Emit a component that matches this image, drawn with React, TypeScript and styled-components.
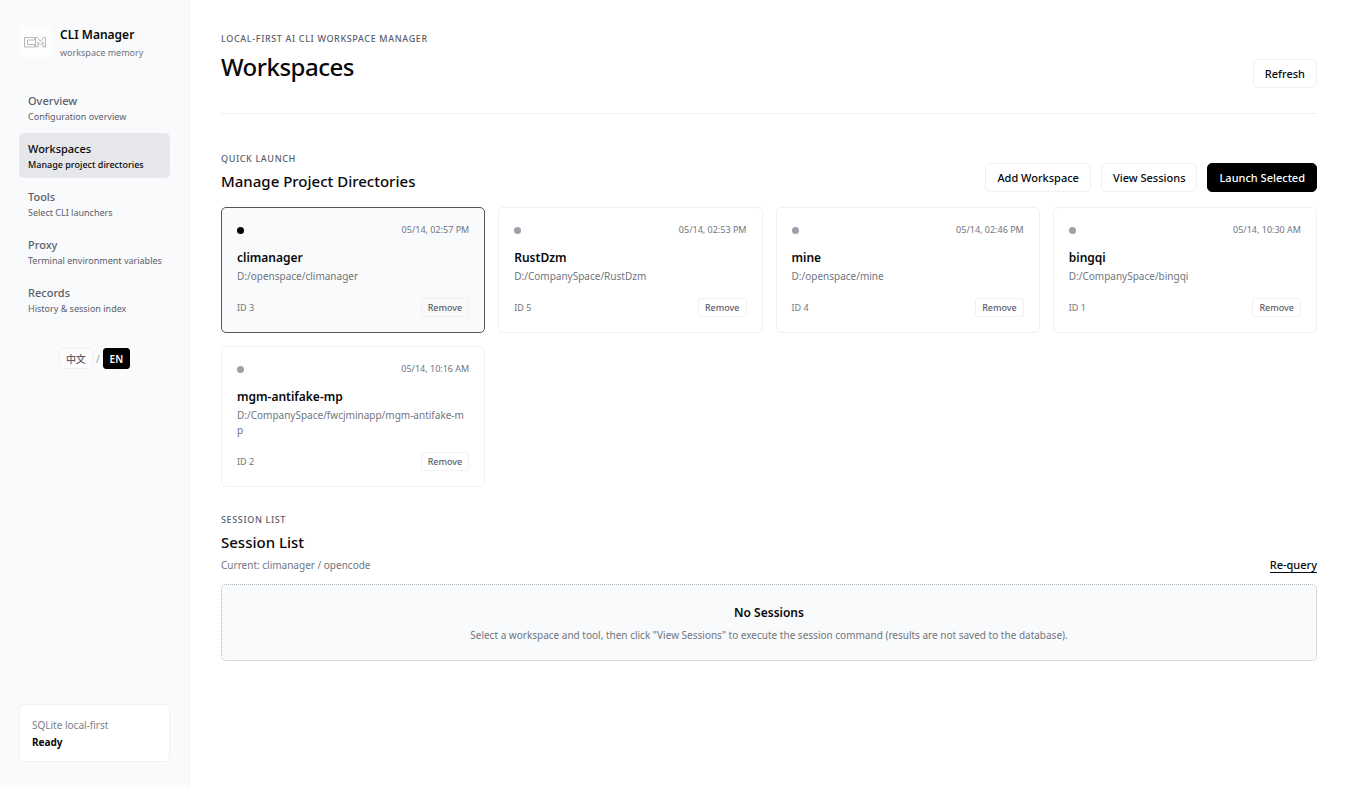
import React from "react";
import styled, { createGlobalStyle, css } from "styled-components";

const GlobalStyle = createGlobalStyle`
  *, *::before, *::after { box-sizing: border-box; }
  body {
    margin: 0;
    background: #ffffff;
    color: #09090b;
    font-family: "Noto Sans", "Noto Sans CJK SC", sans-serif;
    font-size: 12px;
  }
  h1, h2, h3, p { margin: 0; }
  button { font-family: inherit; cursor: pointer; }
`;

const Shell = styled.div`
  display: grid;
  grid-template-columns: 190px minmax(0, 1fr);
  min-height: 100vh;
`;

const Sidebar = styled.aside`
  display: flex;
  flex-direction: column;
  padding: 26px 19px 25px;
  background: #f9fafb;
  border-right: 1px solid #f0f1f3;
`;

const Brand = styled.div`
  display: flex;
  align-items: flex-start;
  gap: 9px;
`;

const LogoTile = styled.span`
  display: grid;
  place-items: center;
  width: 32px;
  height: 32px;
  border-radius: 4px;
  background: #fdfdfd;
`;

const BrandName = styled.div`
  font-size: 12px;
  line-height: 18px;
  font-weight: 600;
`;

const BrandNote = styled.div`
  font-size: 9px;
  line-height: 18px;
  color: #71757e;
`;

const Nav = styled.nav`
  display: flex;
  flex-direction: column;
  gap: 3px;
  margin-top: 23px;
`;

const NavLink = styled.a<{ $active?: boolean }>`
  display: flex;
  flex-direction: column;
  padding: 7px 9px 6px;
  border-radius: 5px;
  text-decoration: none;
  white-space: nowrap;
  color: ${(p) => (p.$active ? "#09090b" : "#5b606b")};
  background: ${(p) => (p.$active ? "#e5e7eb" : "transparent")};
`;

const NavTitle = styled.span`
  font-size: 11px;
  line-height: 17px;
  font-weight: 500;
`;

const NavNote = styled.span<{ $active?: boolean }>`
  font-size: 9px;
  line-height: 15px;
  font-weight: ${(p) => (p.$active ? 500 : 400)};
`;

const Languages = styled.div`
  display: flex;
  justify-content: center;
  align-items: center;
  gap: 3px;
  margin-top: 26px;
  font-size: 10px;
  color: #9ca3af;
`;

const LanguageButton = styled.button<{ $active?: boolean }>`
  height: 21px;
  padding: 0 6px;
  border: 1px solid ${(p) => (p.$active ? "#000000" : "#f0f1f3")};
  border-radius: 3px;
  background: ${(p) => (p.$active ? "#000000" : "#fcfcfd")};
  color: ${(p) => (p.$active ? "#ffffff" : "#5b606b")};
  font-size: 10px;
  font-weight: ${(p) => (p.$active ? 600 : 500)};
`;

const StatusCard = styled.div`
  margin-top: auto;
  padding: 12px 12px 10px;
  border: 1px solid #f0f1f3;
  border-radius: 5px;
  background: #ffffff;
`;

const StatusLabel = styled.div`
  font-size: 10px;
  line-height: 17px;
  color: #7b808a;
`;

const StatusValue = styled.div`
  font-size: 10px;
  line-height: 17px;
  font-weight: 700;
`;

const Main = styled.main`
  padding: 32px 31px;
`;

const PageHeader = styled.header`
  display: flex;
  justify-content: space-between;
  align-items: flex-end;
  padding-bottom: 25px;
  border-bottom: 1px solid #f0f1f3;
`;

const Eyebrow = styled.p`
  font-size: 9px;
  line-height: 13px;
  font-weight: 500;
  letter-spacing: 0.07em;
  text-transform: uppercase;
  color: #5b606b;
`;

const PageTitle = styled.h1`
  margin: 3px 0;
  font-size: 24px;
  line-height: 37px;
  font-weight: 500;
  letter-spacing: -0.02em;
`;

const Section = styled.section<{ $gap: number }>`
  margin-top: ${(p) => p.$gap}px;
`;

const SectionHeader = styled.div`
  display: flex;
  justify-content: space-between;
  align-items: flex-end;
`;

const SectionTitle = styled.h2`
  margin-top: 5px;
  font-size: 15px;
  line-height: 22px;
  font-weight: 500;
`;

const SectionNote = styled.p`
  margin-top: 5px;
  font-size: 10px;
  line-height: 15px;
  color: #71757e;
`;

const Actions = styled.div`
  display: flex;
  gap: 10px;
`;

const Button = styled.button<{ $primary?: boolean }>`
  height: 29px;
  padding: 0 11px;
  border: 1px solid #f0f1f3;
  border-radius: 5px;
  background: #ffffff;
  color: #09090b;
  font-size: 11px;
  font-weight: 500;
  ${(p) =>
    p.$primary &&
    css`
      border-color: #000000;
      background: #000000;
      color: #ffffff;
    `}
`;

const TextButton = styled.button`
  padding: 0;
  border: 0;
  border-bottom: 1px solid #09090b;
  background: transparent;
  color: #09090b;
  font-size: 11px;
  line-height: 15px;
  font-weight: 500;
`;

const CardGrid = styled.div`
  display: grid;
  grid-template-columns: repeat(4, minmax(0, 1fr));
  gap: 13px;
  margin-top: 15px;
`;

const Card = styled.article<{ $selected?: boolean }>`
  padding: 15px;
  border: 1px solid ${(p) => (p.$selected ? "#52555b" : "#f0f1f3")};
  border-radius: 5px;
  background: ${(p) => (p.$selected ? "#f9fafb" : "#ffffff")};
`;

const CardRow = styled.div`
  display: flex;
  justify-content: space-between;
  align-items: center;
  font-size: 9px;
  line-height: 14px;
  color: #71757e;
`;

const Dot = styled.span<{ $on?: boolean }>`
  width: 7px;
  height: 7px;
  border-radius: 50%;
  background: ${(p) => (p.$on ? "#000000" : "#9ca0a8")};
`;

const CardTitle = styled.h3`
  margin-top: 12px;
  font-size: 12px;
  line-height: 18px;
  font-weight: 600;
`;

const CardPath = styled.p`
  margin: 2px 0 14px;
  font-size: 10px;
  line-height: 15px;
  color: #71757e;
  word-break: break-all;
`;

const RemoveButton = styled.button`
  height: 19px;
  padding: 0 6px;
  border: 1px solid #f0f1f3;
  border-radius: 3px;
  background: transparent;
  color: #5b606b;
  font-size: 9px;
  line-height: 14px;
  font-weight: 500;
`;

const EmptyState = styled.div`
  margin-top: 11px;
  padding: 19px 16px 17px;
  border: 1px dotted #b4b7bd;
  border-radius: 5px;
  background: #f9fafb;
  text-align: center;
`;

const EmptyTitle = styled.h3`
  font-size: 12px;
  line-height: 18px;
  font-weight: 600;
`;

const EmptyText = styled.p`
  margin-top: 5px;
  font-size: 10px;
  line-height: 16px;
  color: #71757e;
`;

const navItems = [
  { title: "Overview", note: "Configuration overview" },
  { title: "Workspaces", note: "Manage project directories" },
  { title: "Tools", note: "Select CLI launchers" },
  { title: "Proxy", note: "Terminal environment variables" },
  { title: "Records", note: "History & session index" },
];

const workspaces = [
  { id: 3, name: "climanager", path: "D:/openspace/climanager", time: "05/14, 02:57 PM" },
  { id: 5, name: "RustDzm", path: "D:/CompanySpace/RustDzm", time: "05/14, 02:53 PM" },
  { id: 4, name: "mine", path: "D:/openspace/mine", time: "05/14, 02:46 PM" },
  { id: 1, name: "bingqi", path: "D:/CompanySpace/bingqi", time: "05/14, 10:30 AM" },
  { id: 2, name: "mgm-antifake-mp", path: "D:/CompanySpace/fwcjminapp/mgm-antifake-mp", time: "05/14, 10:16 AM" },
];

function Logo() {
  return (
    <svg width="22" height="11" viewBox="0 0 22 11" fill="none" stroke="#b8b8b8" strokeWidth="1" aria-hidden="true">
      <path d="M.5 .5H10.500V3H3.500V7.500H10.500V10H.5Z" />
      <path d="M11.500 10V.5H13.500L16.500 4.500L19.500 .5H21.500V10H19V5L16.500 8L14 5V10Z" />
    </svg>
  );
}

export default function App() {
  return (
    <>
      <GlobalStyle />
      <Shell>
        <Sidebar>
          <Brand>
            <LogoTile>
              <Logo />
            </LogoTile>
            <div>
              <BrandName>CLI Manager</BrandName>
              <BrandNote>workspace memory</BrandNote>
            </div>
          </Brand>
          <Nav>
            {navItems.map((item) => {
              const active = item.title === "Workspaces";
              return (
                <NavLink key={item.title} href="#" $active={active}>
                  <NavTitle>{item.title}</NavTitle>
                  <NavNote $active={active}>{item.note}</NavNote>
                </NavLink>
              );
            })}
          </Nav>
          <Languages>
            <LanguageButton>中文</LanguageButton>
            <span>/</span>
            <LanguageButton $active>EN</LanguageButton>
          </Languages>
          <StatusCard>
            <StatusLabel>SQLite local-first</StatusLabel>
            <StatusValue>Ready</StatusValue>
          </StatusCard>
        </Sidebar>
        <Main>
          <PageHeader>
            <div>
              <Eyebrow>Local-first AI CLI workspace manager</Eyebrow>
              <PageTitle>Workspaces</PageTitle>
            </div>
            <Button>Refresh</Button>
          </PageHeader>
          <Section $gap={38}>
            <SectionHeader>
              <div>
                <Eyebrow>Quick launch</Eyebrow>
                <SectionTitle>Manage Project Directories</SectionTitle>
              </div>
              <Actions>
                <Button>Add Workspace</Button>
                <Button>View Sessions</Button>
                <Button $primary>Launch Selected</Button>
              </Actions>
            </SectionHeader>
            <CardGrid>
              {workspaces.map((w) => (
                <Card key={w.id} $selected={w.id === 3}>
                  <CardRow>
                    <Dot $on={w.id === 3} />
                    <span>{w.time}</span>
                  </CardRow>
                  <CardTitle>{w.name}</CardTitle>
                  <CardPath>{w.path}</CardPath>
                  <CardRow>
                    <span>ID {w.id}</span>
                    <RemoveButton>Remove</RemoveButton>
                  </CardRow>
                </Card>
              ))}
            </CardGrid>
          </Section>
          <Section $gap={26}>
            <SectionHeader>
              <div>
                <Eyebrow>Session list</Eyebrow>
                <SectionTitle>Session List</SectionTitle>
                <SectionNote>Current: climanager / opencode</SectionNote>
              </div>
              <TextButton>Re-query</TextButton>
            </SectionHeader>
            <EmptyState>
              <EmptyTitle>No Sessions</EmptyTitle>
              <EmptyText>
                Select a workspace and tool, then click "View Sessions" to execute the session command (results are not
                saved to the database).
              </EmptyText>
            </EmptyState>
          </Section>
        </Main>
      </Shell>
    </>
  );
}
